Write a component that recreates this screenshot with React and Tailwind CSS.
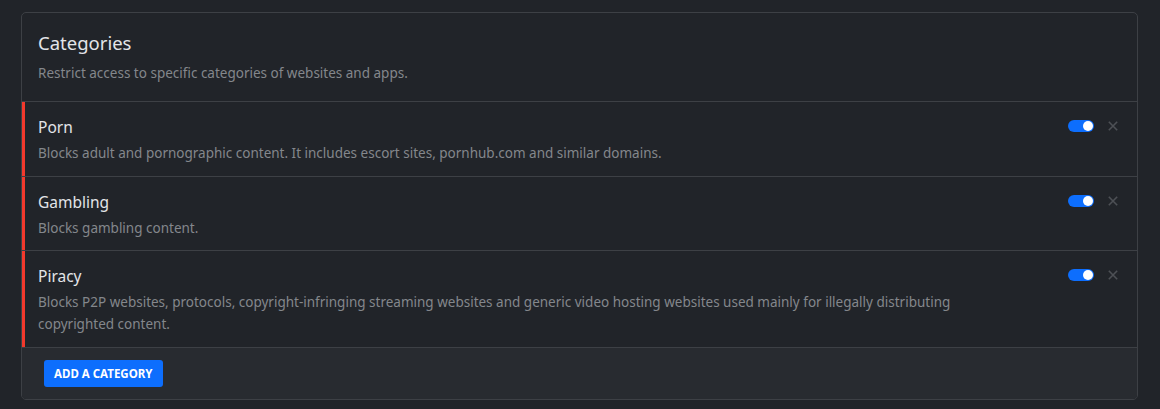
import React from 'react';

const categories = [
    {
        name: 'Porn',
        description: 'Blocks adult and pornographic content. It includes escort sites, pornhub.com and similar domains.',
    },
    {
        name: 'Gambling',
        description: 'Blocks gambling content.',
    },
    {
        name: 'Piracy',
        description:
            'Blocks P2P websites, protocols, copyright-infringing streaming websites and generic video hosting websites used mainly for illegally distributing copyrighted content.',
    },
];

const Toggle = () => (
    <span className="relative inline-flex items-center w-[26px] h-[12px] rounded-full bg-[#0d6efd]">
        <span className="absolute right-[1px] w-[10px] h-[10px] rounded-full bg-white" />
    </span>
);

const CloseIcon = () => (
    <svg className="w-[10px] h-[10px]" viewBox="0 0 10 10" fill="none" stroke="#4d5055" strokeWidth={1.6}>
        <path d="M0.8 0.8l8.4 8.4M9.2 0.8L0.8 9.2" />
    </svg>
);

const CategoryRow = ({ name, description }) => (
    <div className="flex border-t border-[#3d4045] -ml-px">
        <div className="w-[4px] bg-[#f2392c] shrink-0" />
        <div className="flex flex-1 pl-[13px] pr-[19px] pt-[14px] pb-[11.5px]">
            <div className="flex-1">
                <div className="text-[15.5px] leading-[22px] text-[#e3e5e8]">{name}</div>
                <div className="mt-[4px] max-w-[935px] text-[13.5px] leading-[22px] text-[#84878c]">{description}</div>
            </div>
            <div className="flex items-center gap-[14px] h-[20px]">
                <Toggle />
                <CloseIcon />
            </div>
        </div>
    </div>
);

export default function App() {
    return (
        <div className="min-h-screen bg-[#212429] pt-3 pl-[21px] pr-[22px]" style={{ fontFamily: '"Noto Sans", sans-serif' }}>
            <div className="border border-[#3d4045] rounded-[5px] overflow-hidden bg-[#212429]">
                <div className="px-4 pt-4 pb-[18px]">
                    <h2 className="text-[18.5px] leading-[27px] text-[#e3e5e8]">Categories</h2>
                    <p className="mt-[7px] text-[13.5px] leading-[20px] text-[#84878c]">
                        Restrict access to specific categories of websites and apps.
                    </p>
                </div>
                {categories.map((c) => (
                    <CategoryRow key={c.name} {...c} />
                ))}
                <div className="border-t border-[#3d4045] bg-[#282b30] px-[22px] pt-[12px] pb-[12px]">
                    <button
                        type="button"
                        className="h-[27px] px-[10px] rounded-[3px] bg-[#0d6efd] text-white text-[11.5px] font-bold"
                    >
                        ADD A CATEGORY
                    </button>
                </div>
            </div>
        </div>
    );
}
